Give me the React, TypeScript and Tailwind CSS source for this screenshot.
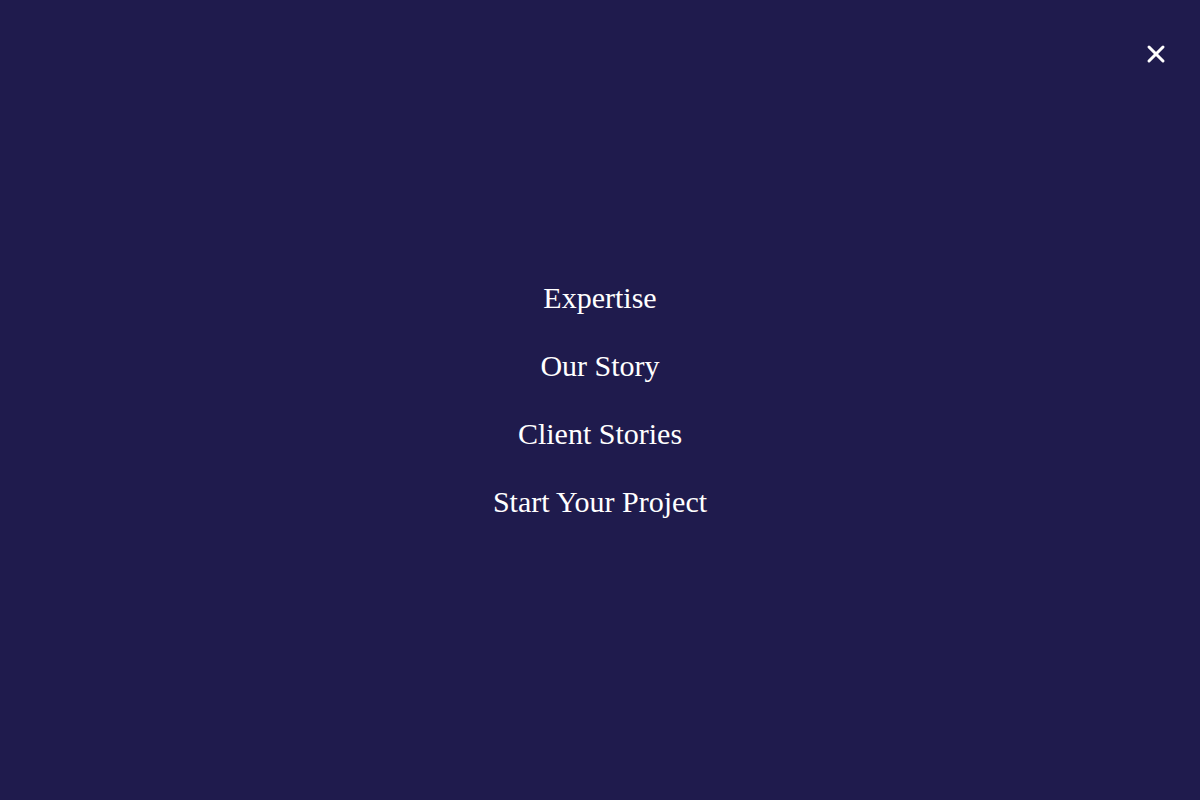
import React from 'react';

const links = ['Expertise', 'Our Story', 'Client Stories', 'Start Your Project'];

export default function App() {
  return (
    <div className="relative min-h-screen w-full bg-[#1f1b4d] flex items-center justify-center">
      <button className="absolute top-[38px] right-[28px] w-8 h-8 flex items-center justify-center text-white">
        <svg width="20" height="20" viewBox="0 0 20 20" fill="none" stroke="currentColor" strokeWidth="3" strokeLinecap="round">
          <line x1="3" y1="3" x2="17" y2="17" />
          <line x1="17" y1="3" x2="3" y2="17" />
        </svg>
      </button>
      <nav className="flex flex-col items-center gap-8">
        {links.map((l) => (
          <a key={l} href="#" className="text-white text-[30px] leading-[36px] font-['Liberation_Serif',serif]">
            {l}
          </a>
        ))}
      </nav>
    </div>
  );
}
